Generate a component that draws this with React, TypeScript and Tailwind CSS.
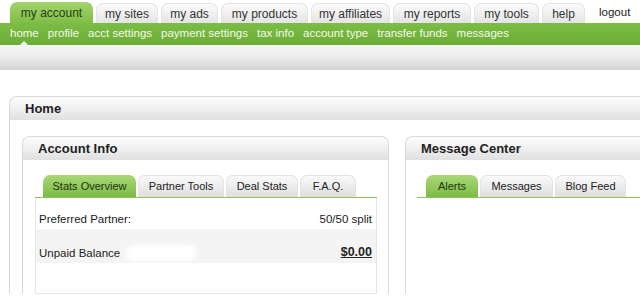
import React from 'react';

const topTabs = [
  { label: 'my account', w: 'w-[83px]', active: true },
  { label: 'my sites', w: 'w-[62px]' },
  { label: 'my ads', w: 'w-[57px]' },
  { label: 'my products', w: 'w-[87px]' },
  { label: 'my affiliates', w: 'w-[79px]' },
  { label: 'my reports', w: 'w-[78px]' },
  { label: 'my tools', w: 'w-[65px]' },
  { label: 'help', w: 'w-[43px]' }
];

const subNav = ['home', 'profile', 'acct settings', 'payment settings', 'tax info', 'account type', 'transfer funds', 'messages'];

type Tab = { label: string; w: string; active?: boolean };

const accountTabs: Tab[] = [
  { label: 'Stats Overview', w: 'w-[93px]', active: true },
  { label: 'Partner Tools', w: 'w-[86px]' },
  { label: 'Deal Stats', w: 'w-[72px]' },
  { label: 'F.A.Q.', w: 'w-[56px]' }
];

const messageTabs: Tab[] = [
  { label: 'Alerts', w: 'w-[52px]', active: true },
  { label: 'Messages', w: 'w-[73px]' },
  { label: 'Blog Feed', w: 'w-[71px]' }
];

const TabStrip: React.FC<{ tabs: Tab[]; offset: string }> = ({ tabs, offset }) => (
  <div className={`flex items-end gap-[2px] border-b border-[#8fc45a] ${offset} h-[23px]`}>
    {tabs.map((tab) => (
      <div
        key={tab.label}
        className={`${tab.w} flex h-[22px] items-center justify-center rounded-t-[7px] text-[11px] ${
          tab.active
            ? 'bg-gradient-to-b from-[#a9d877] to-[#7dbb43] text-[#1d3510]'
            : 'border border-b-0 border-[#e2e2e2] bg-gradient-to-b from-[#fafafa] to-[#dedede] text-[#222]'
        }`}
      >
        {tab.label}
      </div>
    ))}
  </div>
);

const PanelHeader: React.FC<{ title: string; pad: string }> = ({ title, pad }) => (
  <div
    className={`flex h-[24px] items-center rounded-tl-[8px] border-b border-white bg-gradient-to-b from-[#fdfdfd] via-[#efefef] to-[#e0e0e0] ${pad} text-[13px] font-bold text-[#222]`}
  >
    {title}
  </div>
);

export default function App() {
  return (
    <div className="h-[299px] w-[640px] overflow-hidden bg-white font-['Liberation_Sans',Arial,sans-serif]">
      {/* top tabs */}
      <div className="flex h-[23px] items-end gap-[3px] pl-[10px]">
        {topTabs.map((tab) => (
          <div
            key={tab.label}
            className={`${tab.w} flex items-center justify-center rounded-t-[7px] text-[12px] ${
              tab.active
                ? 'h-[21px] bg-gradient-to-b from-[#a3d46e] to-[#80be47] text-[#263f12]'
                : 'h-[20px] border border-b-0 border-[#e4e4e4] bg-gradient-to-b from-[#fbfbfb] to-[#e4e4e4] text-[#333]'
            }`}
          >
            {tab.label}
          </div>
        ))}
        <div className="ml-[11px] flex h-[20px] items-center text-[11.5px] text-[#222]">logout</div>
      </div>

      {/* green sub nav */}
      <div className="relative flex h-[22px] items-center gap-[9px] bg-gradient-to-b from-[#7dbd46] to-[#6aac35] pl-[10px] text-[11.5px] text-[#f2fae8]">
        {subNav.map((item) => (
          <span key={item}>{item}</span>
        ))}
        <span className="absolute bottom-0 left-[20px] h-0 w-0 border-x-[4px] border-b-[4px] border-x-transparent border-b-[#f3f3f3]" />
      </div>

      {/* gray band */}
      <div className="h-[25px] bg-gradient-to-b from-[#f5f5f5] via-[#ececec] to-[#d4d4d4]" />

      {/* Home panel */}
      <div className="ml-[9px] mt-[26px] rounded-tl-[8px] border-l border-t border-[#d9d9d9]">
        <PanelHeader title="Home" pad="pl-[15px]" />
        <div className="flex gap-[16px] pl-[12px] pt-[15px]">
          {/* Account Info */}
          <div className="w-[367px] shrink-0 rounded-t-[8px] border-x border-t border-[#d9d9d9]">
            <PanelHeader title="Account Info" pad="pl-[15px] rounded-tr-[8px]" />
            <div className="pl-[12px] pr-[11px] pt-[14px]">
              <TabStrip tabs={accountTabs} offset="pl-[8px]" />
              <div className="border-x border-b border-[#e6e6e6] text-[11.5px] text-[#222]">
                <div className="flex h-[31px] items-end justify-between pb-[1px] pl-[3px] pr-[4px]">
                  <span>Preferred Partner:</span>
                  <span>50/50 split</span>
                </div>
                <div className="flex h-[34px] items-end justify-between bg-[#f4f4f4] pb-[1px] pl-[3px] pr-[4px]">
                  <span className="flex items-center gap-[6px]">
                    Unpaid Balance
                    <span className="h-[16px] w-[70px] rounded-full bg-white blur-[2px]" />
                  </span>
                  <span className="text-[12.5px] font-bold underline">$0.00</span>
                </div>
                <div className="h-[30px]" />
              </div>
            </div>
          </div>

          {/* Message Center */}
          <div className="flex-1 rounded-tl-[8px] border-l border-t border-[#d9d9d9]">
            <PanelHeader title="Message Center" pad="pl-[15px]" />
            <div className="pl-[11px] pt-[14px]">
              <TabStrip tabs={messageTabs} offset="pl-[9px]" />
            </div>
          </div>
        </div>
      </div>
    </div>
  );
}
